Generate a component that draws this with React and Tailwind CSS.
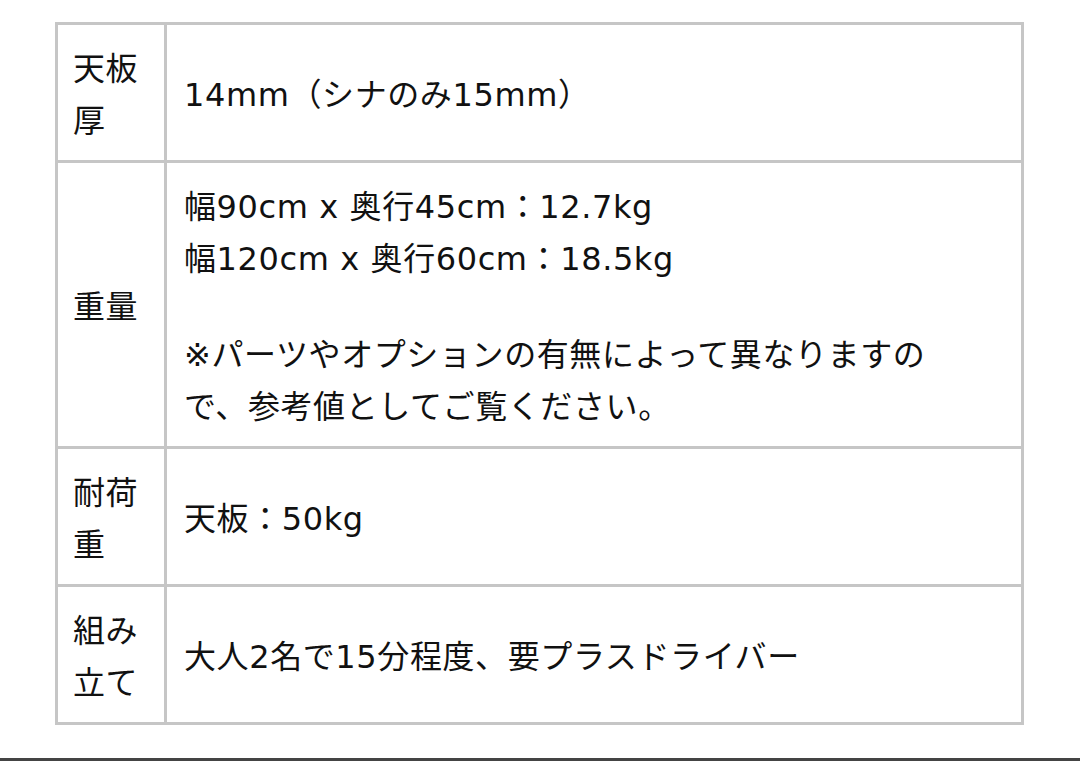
import React from "react";

const rows = [
  { label: "天板厚", body: [["14mm（シナのみ15mm）"]] },
  {
    label: "重量",
    body: [
      ["幅90cm x 奥行45cm：12.7kg", "幅120cm x 奥行60cm：18.5kg"],
      ["※パーツやオプションの有無によって異なりますので、参考値としてご覧ください。"],
    ],
  },
  { label: "耐荷重", body: [["天板：50kg"]] },
  { label: "組み立て", body: [["大人2名で15分程度、要プラスドライバー"]] },
];

export default function App() {
  return (
    <div className="min-h-[761px] flex flex-col bg-white text-[#111] font-['DejaVu_Sans','Noto_Sans_CJK_JP',sans-serif]">
      <table className="ml-[55px] mt-[22px] w-[969px] border-separate border-spacing-0 border-l-[3px] border-t-[3px] border-[#c6c6c6] text-[32px] leading-[52px] tracking-[0.6px]">
        <tbody>
          {rows.map((row) => (
            <tr key={row.label}>
              <th className="w-[109px] border-r-[3px] border-b-[3px] border-[#c6c6c6] pl-[15px] pr-[14px] pt-[18px] pb-[13px] text-left font-normal align-middle">
                {row.label}
              </th>
              <td className="border-r-[3px] border-b-[3px] border-[#c6c6c6] pl-[17px] pr-[47px] pt-[18px] pb-[13px] align-middle">
                {row.body.map((para, i) => (
                  <p key={i} className={i > 0 ? "mt-[44px]" : ""}>
                    {para.map((line) => (
                      <span key={line} className="block">
                        {line}
                      </span>
                    ))}
                  </p>
                ))}
              </td>
            </tr>
          ))}
        </tbody>
      </table>
      <div className="mt-auto h-[3px] bg-[#444]" />
    </div>
  );
}
